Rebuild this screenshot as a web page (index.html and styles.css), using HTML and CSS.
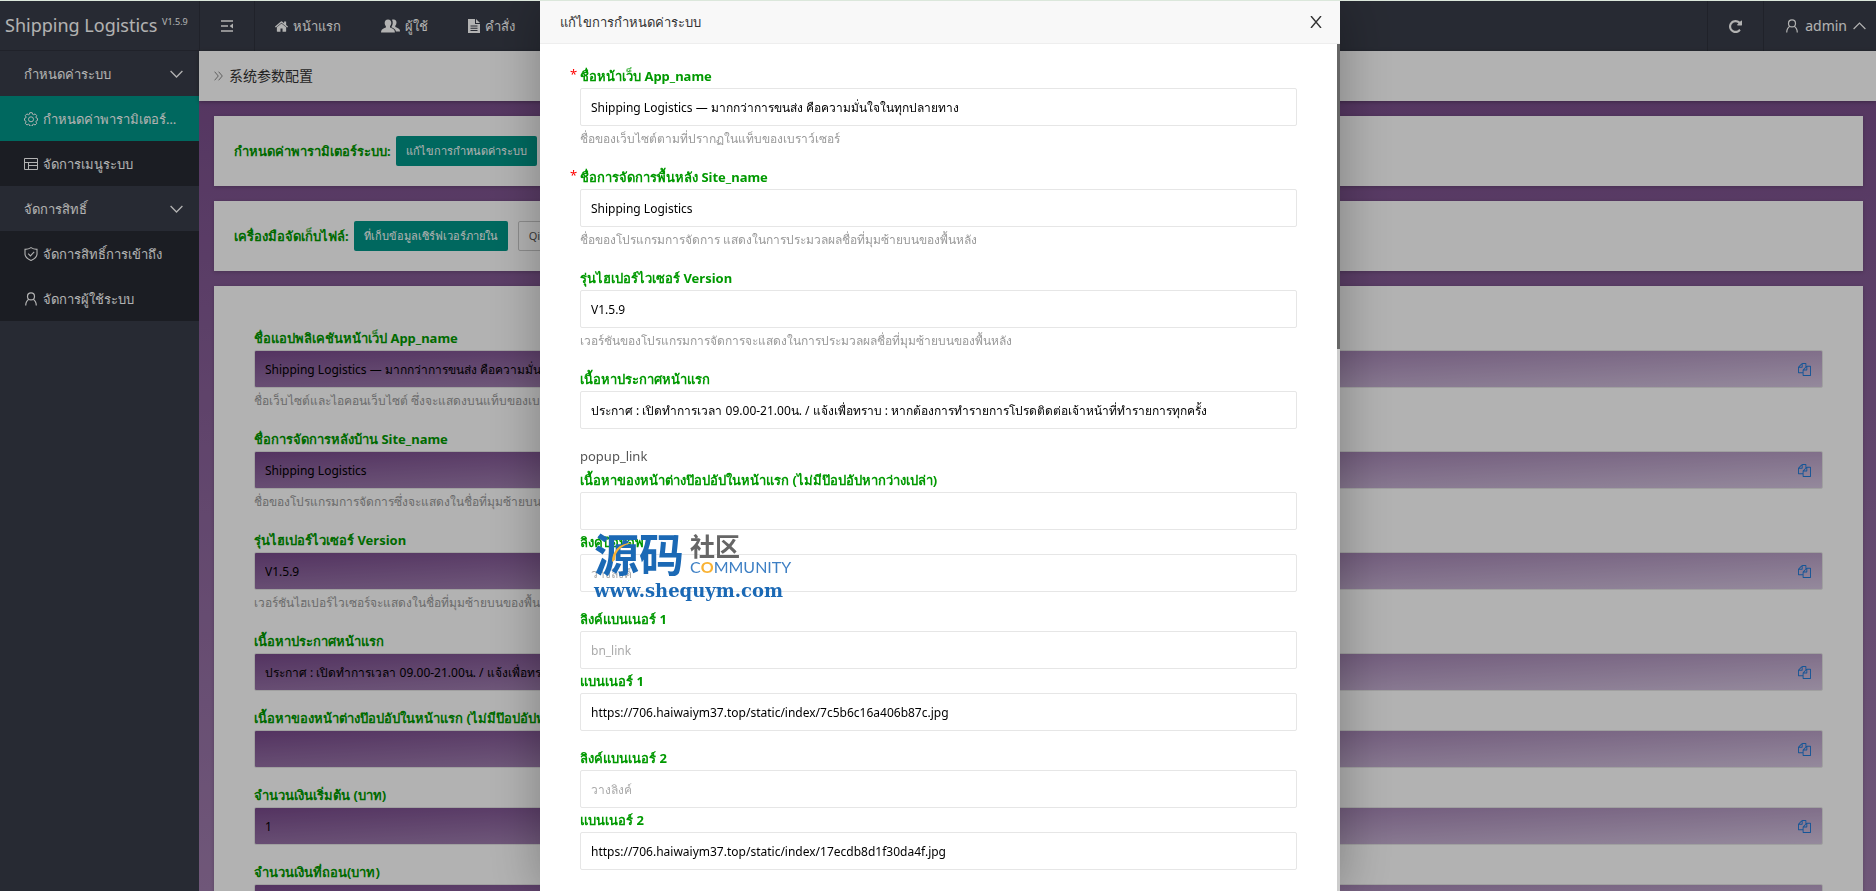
FILE: index.html
```html
<!DOCTYPE html>
<html lang="th">
<head>
    <meta charset="utf-8">
    <title>Shipping Logistics</title>
    <link rel="stylesheet" href="styles.css">
</head>
<body>
    <svg class="sprite" aria-hidden="true">
        <symbol id="icon-copy" viewBox="0 0 1792 1792"><path d="M1696 384q40 0 68 28t28 68v1216q0 40-28 68t-68 28h-960q-40 0-68-28t-28-68v-288h-544q-40 0-68-28t-28-68v-672q0-40 20-88t48-76l408-408q28-28 76-48t88-20h416q40 0 68 28t28 68v328q68-40 128-40h416zm-544 213l-299 299h299v-299zm-640-384l-299 299h299v-299zm196 647l316-316v-416h-384v416q0 40-28 68t-68 28h-416v640h512v-256q0-40 20-88t48-76zm956 804v-1152h-384v416q0 40-28 68t-68 28h-416v640h896z"/></symbol>
        <symbol id="icon-user" viewBox="0 0 14 14"><g fill="none" stroke="currentColor" stroke-width="1.2"><circle cx="7" cy="4.4" r="3.5"/><path d="M4.8 7.2C2.8 8.4 1.8 10.6 1.7 13.4M9.2 7.2c2 1.2 3 3.4 3.1 6.2"/></g></symbol>
    </svg>

    <div class="app">
        <!-- Top bar -->
        <header class="topbar">
            <a class="logo" href="#">Shipping Logistics <sup>V1.5.9</sup></a>
            <button class="bar-btn bar-btn-fold" aria-label="menu">
                <svg width="14" height="14" viewBox="0 0 14 14"><g fill="none" stroke="currentColor" stroke-width="1.4"><path d="M1 2h12M1 12h12M1 7h7"/></g><path d="M13 4.4v5.2L9.6 7z" fill="currentColor"/></svg>
            </button>
            <nav class="top-nav">
                <a href="#">
                    <svg width="13" height="13" viewBox="90 240 1612 1300"><path fill="currentColor" d="M1472 992v480q0 26-19 45t-45 19h-384v-384h-256v384h-384q-26 0-45-19t-19-45v-480q0-1 .5-3t.5-3l575-474 575 474q1 2 1 6zm223-69l-62 74q-8 9-21 11h-3q-13 0-21-7l-692-577-692 577q-12 8-24 7-13-2-21-11l-62-74q-8-10-7-23.5t11-21.5l719-599q32-26 76-26t76 26l244 204v-195q0-14 9-23t23-9h192q14 0 23 9t9 23v408l219 182q10 8 11 21.5t-7 23.5z"/></svg>
                    หน้าแรก
                </a>
                <a href="#">
                    <svg width="19" height="14" viewBox="0 0 19 14"><g fill="currentColor"><path d="M7 .5c2.200 0 3.400 1.500 3.300 3.600-.1 1.400-.6 2.500-1.300 3.200v1.300c1.600.8 4.400 1.500 4.700 3.300l.2 1.600H0l.2-1.600c.3-1.800 3.100-2.500 4.700-3.300V7.300C4.200 6.600 3.700 5.500 3.700 4.100 3.600 2 4.800.5 7 .5z"/><path d="M11 .7c.5-.2 1-.3 1.600-.3 2 0 3 1.400 2.900 3.300-.1 1.300-.5 2.300-1.200 3v1.200c1.500.8 4.200 1.400 4.500 3.100l.2 1.500h-4.100c-.2-2.200-2.100-3.200-4.600-4.300 1.700-2.400 1.900-5.400.7-7.500z"/></g></svg>
                    ผู้ใช้
                </a>
                <a href="#">
                    <svg width="12" height="14" viewBox="0 0 12 14"><path fill="currentColor" fill-rule="evenodd" d="M0 0h7v5h5v9H0zM8 0l4 4H8zM2.500 6.500v1h7v-1zm0 2.200v1h7v-1zm0 2.200v1h7v-1z"/></svg>
                    คำสั่ง
                </a>
            </nav>
            <button class="bar-btn" aria-label="refresh">
                <svg width="13" height="13" viewBox="128 128 1536 1536"><path fill="currentColor" d="M1664 256v448q0 26-19 45t-45 19h-448q-42 0-59-40-17-39 14-69l138-138q-148-137-349-137-104 0-198.500 40.500t-163.500 109.500-109.500 163.500-40.500 198.500 40.500 198.500 109.500 163.500 163.500 109.500 198.500 40.500q119 0 225-52t179-147q7-10 23-12 15 0 25 9l137 138q9 8 9.500 20.500t-7.500 22.500q-109 132-264 204.500t-327 72.500q-156 0-298-61t-245-164-164-245-61-298 61-298 164-245 245-164 298-61q147 0 284.500 55.500t244.500 156.500l130-129q29-31 70-14 39 17 39 59z"/></svg>
            </button>
            <button class="bar-btn bar-btn-user">
                <svg width="14" height="14"><use href="#icon-user"/></svg>
                admin
                <svg width="13" height="8" viewBox="0 0 13 8"><path d="M.6 7l5.900-6 5.900 6" fill="none" stroke="currentColor" stroke-width="1.2"/></svg>
            </button>
        </header>

        <div class="columns">
            <!-- Side menu -->
            <nav class="sidebar">
                <button class="menu-group">กำหนดค่าระบบ
                    <svg width="13" height="8" viewBox="0 0 13 8"><path d="M.6 1l5.900 6 5.900-6" fill="none" stroke="currentColor" stroke-width="1.3"/></svg>
                </button>
                <div class="submenu">
                    <a class="active" href="#">
                        <svg width="14" height="14" viewBox="0 0 14 14"><g fill="none" stroke="currentColor"><path stroke-linejoin="round" d="M5.800.7h2.400l.4 1.600 1 .4 1.500-.8 1.600 1.700-.8 1.400.4 1 1.200.4v2l-1.200.5-.4 1 .8 1.400-1.600 1.700-1.500-.8-1 .4-.4 1.500H5.800l-.4-1.500-1-.4-1.500.8-1.600-1.700.8-1.400-.4-1L.5 8.400v-2L1.700 6l.4-1-.8-1.400 1.600-1.700 1.500.8 1-.4z"/><circle cx="7" cy="7.300" r="2.500"/></g></svg>
                        <span>กำหนดค่าพารามิเตอร์ระบบ</span>
                    </a>
                    <a href="#">
                        <svg width="14" height="14" viewBox="0 0 14 14"><path d="M.5 1.500h13v11H.5zM.5 5.500h13M4.500 5.500v7M4.500 8.500h9" fill="none" stroke="currentColor"/></svg>
                        <span>จัดการเมนูระบบ</span>
                    </a>
                </div>
                <button class="menu-group">จัดการสิทธิ์
                    <svg width="13" height="8" viewBox="0 0 13 8"><path d="M.6 1l5.900 6 5.900-6" fill="none" stroke="currentColor" stroke-width="1.3"/></svg>
                </button>
                <div class="submenu">
                    <a href="#">
                        <svg width="14" height="14" viewBox="0 0 14 14"><g fill="none" stroke="currentColor" stroke-width="1.100"><path d="M7 .6c1.700 1.200 3.600 1.700 6 1.800v4.400c0 3.200-2.400 5.200-6 6.700-3.600-1.500-6-3.500-6-6.700V2.400C3.400 2.300 5.300 1.800 7 .6z"/><path d="M4.200 6.700l2.200 2.200 3.800-4"/></g></svg>
                        <span>จัดการสิทธิ์การเข้าถึง</span>
                    </a>
                    <a href="#">
                        <svg width="14" height="14"><use href="#icon-user"/></svg>
                        <span>จัดการผู้ใช้ระบบ</span>
                    </a>
                </div>
            </nav>

            <main class="main">
                <div class="breadcrumb">
                    <svg width="9" height="10" viewBox="0 0 9 10"><path d="M.6.700L4.300 5 .6 9.300M4.600.7L8.300 5 4.600 9.300" fill="none" stroke="currentColor"/></svg>
                    <span>系统参数配置</span>
                </div>
                <div class="panels">
                    <section class="card card-row">
                        <b>กำหนดค่าพารามิเตอร์ระบบ:</b>
                        <button class="btn">แก้ไขการกำหนดค่าระบบ</button>
                    </section>
                    <section class="card card-row">
                        <b>เครื่องมือจัดเก็บไฟล์:</b>
                        <button class="btn">ที่เก็บข้อมูลเซิร์ฟเวอร์ภายใน</button>
                        <button class="btn btn-plain">Qiniu</button>
                    </section>
                    <section class="card card-form">
                        <div class="field">
                            <label for="app-name">ชื่อแอปพลิเคชันหน้าเว็ป App_name</label>
                            <div class="copy-box"><input id="app-name" readonly value="Shipping Logistics — มากกว่าการขนส่ง คือความมั่นใจในทุกปลายทาง"><button aria-label="copy"><svg><use href="#icon-copy"/></svg></button></div>
                            <p>ชื่อเว็บไซต์และไอคอนเว็บไซต์ ซึ่งจะแสดงบนแท็บของเบราว์เซอร์</p>
                        </div>
                        <div class="field">
                            <label for="site-name">ชื่อการจัดการหลังบ้าน Site_name</label>
                            <div class="copy-box"><input id="site-name" readonly value="Shipping Logistics"><button aria-label="copy"><svg><use href="#icon-copy"/></svg></button></div>
                            <p>ชื่อของโปรแกรมการจัดการซึ่งจะแสดงในชื่อที่มุมซ้ายบนของพื้นหลัง</p>
                        </div>
                        <div class="field">
                            <label for="version">รุ่นไฮเปอร์ไวเซอร์ Version</label>
                            <div class="copy-box"><input id="version" readonly value="V1.5.9"><button aria-label="copy"><svg><use href="#icon-copy"/></svg></button></div>
                            <p>เวอร์ชันไฮเปอร์ไวเซอร์จะแสดงในชื่อที่มุมซ้ายบนของพื้นหลัง</p>
                        </div>
                        <div class="field">
                            <label for="notice">เนื้อหาประกาศหน้าแรก</label>
                            <div class="copy-box"><input id="notice" readonly value="ประกาศ : เปิดทำการเวลา 09.00-21.00น. / แจ้งเพื่อทราบ : หากต้องการทำรายการโปรดติดต่อเจ้าหน้าที่ทำรายการทุกครั้ง"><button aria-label="copy"><svg><use href="#icon-copy"/></svg></button></div>
                        </div>
                        <div class="field">
                            <label for="popup">เนื้อหาของหน้าต่างป๊อปอัปในหน้าแรก (ไม่มีป๊อปอัปหากว่างเปล่า)</label>
                            <div class="copy-box"><input id="popup" readonly><button aria-label="copy"><svg><use href="#icon-copy"/></svg></button></div>
                        </div>
                        <div class="field">
                            <label for="start-money">จำนวนเงินเริ่มต้น (บาท)</label>
                            <div class="copy-box"><input id="start-money" readonly value="1"><button aria-label="copy"><svg><use href="#icon-copy"/></svg></button></div>
                        </div>
                        <div class="field">
                            <label for="withdraw-money">จำนวนเงินที่ถอน(บาท)</label>
                            <div class="copy-box"><input id="withdraw-money" readonly><button aria-label="copy"><svg><use href="#icon-copy"/></svg></button></div>
                        </div>
                    </section>
                </div>
            </main>
        </div>
    </div>

    <!-- Edit dialog -->
    <div class="shade">
        <div class="modal" role="dialog" aria-labelledby="modal-title">
            <div class="modal-header">
                <span id="modal-title">แก้ไขการกำหนดค่าระบบ</span>
                <button aria-label="close">
                    <svg width="12" height="12" viewBox="0 0 12 12"><path d="M1 0l10 12M11 0L1 12" stroke="currentColor" stroke-width="1.400"/></svg>
                </button>
            </div>
            <div class="modal-body">
                <form class="modal-form">
                    <div class="field">
                        <label class="required" for="m-app-name">ชื่อหน้าเว็บ App_name</label>
                        <input id="m-app-name" value="Shipping Logistics — มากกว่าการขนส่ง คือความมั่นใจในทุกปลายทาง">
                        <p>ชื่อของเว็บไซต์ตามที่ปรากฏในแท็บของเบราว์เซอร์</p>
                    </div>
                    <div class="field">
                        <label class="required" for="m-site-name">ชื่อการจัดการพื้นหลัง Site_name</label>
                        <input id="m-site-name" value="Shipping Logistics">
                        <p>ชื่อของโปรแกรมการจัดการ แสดงในการประมวลผลชื่อที่มุมซ้ายบนของพื้นหลัง</p>
                    </div>
                    <div class="field">
                        <label for="m-version">รุ่นไฮเปอร์ไวเซอร์ Version</label>
                        <input id="m-version" value="V1.5.9">
                        <p>เวอร์ชันของโปรแกรมการจัดการจะแสดงในการประมวลผลชื่อที่มุมซ้ายบนของพื้นหลัง</p>
                    </div>
                    <div class="field">
                        <label for="m-notice">เนื้อหาประกาศหน้าแรก</label>
                        <input id="m-notice" value="ประกาศ : เปิดทำการเวลา 09.00-21.00น. / แจ้งเพื่อทราบ : หากต้องการทำรายการโปรดติดต่อเจ้าหน้าที่ทำรายการทุกครั้ง">
                    </div>
                    <div class="field">
                        <div class="note">popup_link</div>
                        <label for="m-popup">เนื้อหาของหน้าต่างป๊อปอัปในหน้าแรก (ไม่มีป๊อปอัปหากว่างเปล่า)</label>
                        <input id="m-popup">
                        <label for="m-popup-link">ลิงค์ป๊อบอัพ</label>
                        <input id="m-popup-link" placeholder="วางลิงค์">
                    </div>
                    <div class="field">
                        <label for="m-link1">ลิงค์แบนเนอร์ 1</label>
                        <input id="m-link1" placeholder="bn_link">
                        <label for="m-banner1">แบนเนอร์ 1</label>
                        <input id="m-banner1" value="https://706.haiwaiym37.top/static/index/7c5b6c16a406b87c.jpg">
                    </div>
                    <div class="field">
                        <label for="m-link2">ลิงค์แบนเนอร์ 2</label>
                        <input id="m-link2" placeholder="วางลิงค์">
                        <label for="m-banner2">แบนเนอร์ 2</label>
                        <input id="m-banner2" value="https://706.haiwaiym37.top/static/index/17ecdb8d1f30da4f.jpg">
                    </div>
                </form>
                <div class="scroll-track"><div class="scroll-thumb"></div></div>
            </div>

            <div class="watermark">
                <div class="wm-top">
                    <span class="wm-big">源码</span>
                    <span class="wm-side">
                        <span class="wm-cn">社区</span>
                        <span class="wm-en">C<i>O</i>MMUNITY</span>
                    </span>
                </div>
                <div class="wm-url">www.shequym.com</div>
                <svg class="wm-arc" width="22" height="22" viewBox="0 0 22 22"><path d="M1 21C1 10 8 2 21 2 11 4 4 10 4 19z" fill="#f9b233"/></svg>
            </div>
        </div>
    </div>
</body>
</html>
```
FILE: styles.css
```css
:root {
    --dark: #393d49;
    --green: #009688;
    --label: #009900;
    --border: #e6e6e6;
}

* {
    box-sizing: border-box;
}

body {
    margin: 0;
    height: 100vh;
    overflow: hidden;
    font-family: "Noto Sans", "Noto Sans CJK SC", sans-serif;
    font-size: 13px;
    line-height: 24px;
    color: #333;
    border-top: 1px solid #dbe7db;
}

a {
    color: inherit;
    text-decoration: none;
}

button,
input {
    font: inherit;
    color: inherit;
}

button {
    border: none;
    background: none;
    padding: 0;
    cursor: pointer;
}

p {
    margin: 0;
}

.sprite {
    position: absolute;
    width: 0;
    height: 0;
}

.app {
    display: flex;
    flex-direction: column;
    height: 100%;
}

/* top bar */
.topbar {
    display: flex;
    flex-shrink: 0;
    height: 50px;
    background: var(--dark);
    color: #fff;
}

.logo {
    width: 200px;
    padding-left: 5px;
    line-height: 48px;
    font-size: 18px;
    white-space: nowrap;
    border-right: 1px solid #2f323d;
    border-bottom: 1px solid #2f323d;
}

.logo sup {
    font-size: 9px;
    line-height: 1;
}

.bar-btn {
    display: flex;
    align-items: center;
    justify-content: center;
    width: 56px;
    border-left: 1px solid #2f323d;
}

.bar-btn-fold {
    width: 55px;
    border-left: none;
    border-right: 1px solid #2f323d;
}

.bar-btn-user {
    justify-content: flex-end;
    width: 113px;
    padding-right: 10px;
    gap: 6px;
    font-size: 14px;
}

.top-nav {
    display: flex;
    flex: 1;
}

.top-nav a {
    display: flex;
    align-items: center;
    gap: 5px;
    padding: 0 20px;
}

/* side menu */
.columns {
    display: flex;
    flex: 1;
    min-height: 0;
}

.sidebar {
    flex-shrink: 0;
    width: 199px;
    background: var(--dark);
    color: #fff;
}

.menu-group {
    display: flex;
    align-items: center;
    justify-content: space-between;
    width: 100%;
    height: 45px;
    padding: 0 16px 0 24px;
}

.submenu {
    background: rgba(0, 0, 0, 0.3);
}

.submenu a {
    display: flex;
    align-items: center;
    gap: 5px;
    height: 45px;
    padding: 0 20px 0 24px;
}

.submenu a.active {
    background: var(--green);
}

.submenu svg {
    flex-shrink: 0;
}

.submenu span {
    overflow: hidden;
    text-overflow: ellipsis;
    white-space: nowrap;
}

/* page */
.main {
    display: flex;
    flex-direction: column;
    flex: 1;
    min-width: 0;
    background: linear-gradient(to bottom, #784c8a, #a07dae);
}

.breadcrumb {
    display: flex;
    align-items: center;
    flex-shrink: 0;
    gap: 6px;
    height: 50px;
    padding-left: 15px;
    background: #fff;
    font-size: 14px;
    box-shadow: 0 1px 4px rgba(0, 0, 0, 0.3);
}

.breadcrumb svg {
    color: #888;
}

.panels {
    display: flex;
    flex-direction: column;
    gap: 15px;
    padding: 15px 13px 0 15px;
    min-height: 0;
}

.card {
    background: #fff;
    box-shadow: 0 1px 4px rgba(0, 0, 0, 0.2);
}

.card-row {
    display: flex;
    align-items: center;
    flex-shrink: 0;
    gap: 10px;
    padding: 20px;
}

.card-row b {
    margin-right: -5px;
    color: var(--label);
}

.card-form {
    padding: 40px;
}

.btn {
    height: 30px;
    padding: 0 10px;
    font-size: 11px;
    color: #fff;
    background: var(--green);
    border-radius: 2px;
    white-space: nowrap;
}

.btn-plain {
    color: #555;
    background: #fff;
    border: 1px solid #c9c9c9;
}

/* form fields */
.field {
    margin-bottom: 15px;
}

.field label {
    display: block;
    height: 24px;
    font-weight: bold;
    color: var(--label);
    white-space: nowrap;
}

.field p {
    height: 24px;
    line-height: 26px;
    font-size: 12px;
    color: #999;
}

.field input {
    display: block;
    width: 100%;
    height: 38px;
    padding: 0 10px;
    font-size: 12px;
    color: #000;
    background: #fff;
    border: 1px solid var(--border);
    border-radius: 2px;
    outline: none;
}

.field input::placeholder {
    color: #aaa;
}

.field .copy-box {
    display: flex;
    height: 38px;
    background: linear-gradient(177deg, #784a8b, #d5c5e0);
    border: 1px solid var(--border);
    border-radius: 2px;
}

.field .copy-box input {
    flex: 1;
    height: 36px;
    background: none;
    border: none;
}

.copy-box button {
    width: 36px;
    color: #1e7ad8;
}

.copy-box svg {
    display: block;
    width: 13px;
    height: 13px;
    margin: 0 auto;
    fill: currentColor;
}

/* dialog */
.shade {
    position: fixed;
    inset: 1px 0 0 0;
    display: flex;
    justify-content: center;
    padding-left: 4px;
    overflow: hidden;
    background: rgba(0, 0, 0, 0.3);
}

.modal {
    position: relative;
    display: flex;
    flex-direction: column;
    width: 800px;
    background: #fff;
    box-shadow: 1px 1px 50px rgba(0, 0, 0, 0.3);
}

.modal-header {
    display: flex;
    align-items: center;
    justify-content: space-between;
    flex-shrink: 0;
    height: 43px;
    padding: 0 18px 0 20px;
    background: #f8f8f8;
    border-bottom: 1px solid #eee;
}

.modal-header button {
    display: flex;
}

.modal-body {
    display: flex;
    flex: 1;
    min-height: 0;
}

.modal-form {
    flex: 1;
    padding: 20px 40px;
    overflow: hidden;
}

.required::before {
    content: "*";
    position: absolute;
    margin-left: -10px;
    line-height: 20px;
    font-weight: normal;
    color: #f00;
}

.note {
    height: 24px;
    color: #555;
}

.scroll-track {
    width: 3px;
    background: #ccc;
}

.scroll-thumb {
    height: 36%;
    background: #666;
}

/* site stamp, floats above the dialog */
.watermark {
    position: absolute;
    top: 532px;
    left: 54px;
    color: #1b69b5;
    pointer-events: none;
}

.wm-top {
    display: flex;
    gap: 6px;
    height: 46px;
}

.wm-big {
    font-size: 45px;
    line-height: 44px;
    font-weight: bold;
}

.wm-side {
    display: flex;
    flex-direction: column;
}

.wm-cn {
    font-size: 25px;
    line-height: 26px;
    font-weight: bold;
    color: #666;
}

.wm-en {
    font-family: Lato, sans-serif;
    font-size: 16px;
    line-height: 16px;
    color: #3d7fc4;
}

.wm-en i {
    font-style: normal;
    font-weight: bold;
    color: #f9b233;
}

.wm-url {
    font-family: "DejaVu Serif", serif;
    font-size: 18px;
    line-height: 24px;
    font-weight: bold;
}

.wm-arc {
    position: absolute;
    top: 8px;
    left: 17px;
}
```
